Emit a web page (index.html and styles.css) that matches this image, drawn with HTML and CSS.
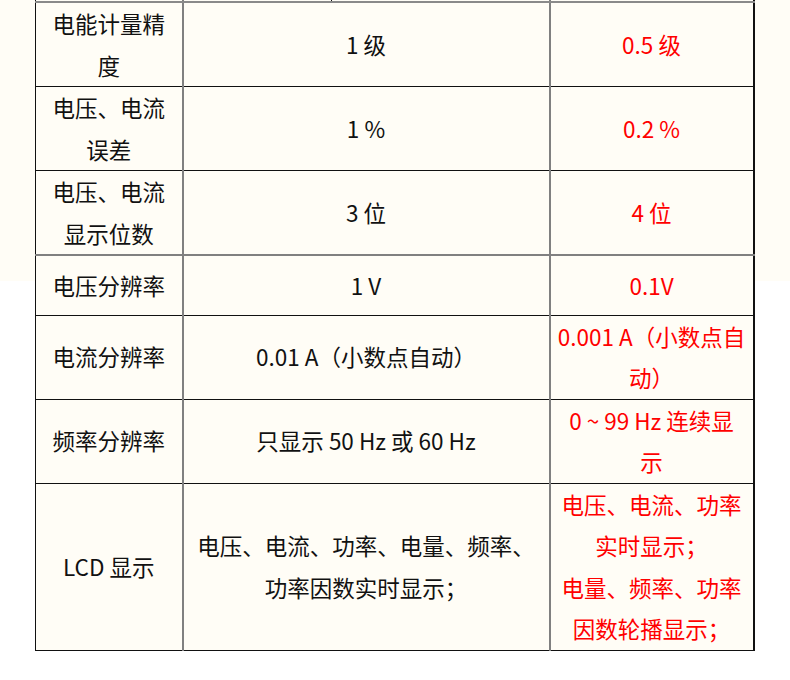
FILE: index.html
```html
<!DOCTYPE html>
<html lang="zh-CN">
<head>
<meta charset="utf-8">
<title>参数对比</title>
<link rel="stylesheet" href="styles.css">
</head>
<body>
<table class="spec">
  <colgroup>
    <col class="c1">
    <col class="c2a">
    <col class="c2b">
    <col class="c3">
  </colgroup>
  <tr class="stub">
    <td></td><td></td><td></td><td></td>
  </tr>
  <tr class="r2l">
    <td>电能计量精<br>度</td>
    <td colspan="2">1 级</td>
    <td class="red">0.5 级</td>
  </tr>
  <tr class="r2l">
    <td>电压、电流<br>误差</td>
    <td colspan="2">1 %</td>
    <td class="red">0.2 %</td>
  </tr>
  <tr class="r2l grey-bottom">
    <td>电压、电流<br>显示位数</td>
    <td colspan="2">3 位</td>
    <td class="red">4 位</td>
  </tr>
  <tr class="r1l">
    <td>电压分辨率</td>
    <td colspan="2">1 V</td>
    <td class="red">0.1V</td>
  </tr>
  <tr class="r2l">
    <td>电流分辨率</td>
    <td colspan="2">0.01 A（小数点自动）</td>
    <td class="red">0.001 A（小数点自<br>动）</td>
  </tr>
  <tr class="r2l">
    <td>频率分辨率</td>
    <td colspan="2">只显示 50 Hz 或 60 Hz</td>
    <td class="red">0 ~ 99 Hz 连续显<br>示</td>
  </tr>
  <tr class="r4l">
    <td>LCD 显示</td>
    <td colspan="2">电压、电流、功率、电量、频率、<br>功率因数实时显示；</td>
    <td class="red">电压、电流、功率<br>实时显示；<br>电量、频率、功率<br>因数轮播显示；</td>
  </tr>
</table>
</body>
</html>
```

FILE: styles.css
```css
html, body {
  margin: 0;
  padding: 0;
}

body {
  width: 790px;
  height: 680px;
  background: linear-gradient(#fffdf6 0, #fffdf6 281px, #ffffff 281px, #ffffff 100%);
  font-family: "Noto Sans CJK SC", "Noto Sans", sans-serif;
  color: #111111;
}

.spec {
  margin-left: 35px;
  border-collapse: collapse;
  table-layout: fixed;
  width: 718px;
  background: #fffdf6;
  border-left: 1px solid #111;
  border-right: 2px solid #111;
  border-bottom: 1px solid #111;
}

.c1 { width: 147px; }
.c2a { width: 149px; }
.c2b { width: 218px; }
.c3 { width: 204px; }

.spec td {
  padding: 0 6px;
  text-align: center;
  vertical-align: middle;
  font-size: 22.5px;
  line-height: 41.5px;
  border-top: 1px solid #111;
  border-left: 2px solid #808080;
}

.spec td:first-child {
  border-left: 1px solid #111;
}

.spec tr.stub td {
  height: 1px;
  padding: 0;
  font-size: 0;
  line-height: 0;
  border-top: none;
  border-left: 1px solid #111;
  border-bottom: 2px solid #8a8a8a;
}

.spec tr.stub td:nth-child(2),
.spec tr.stub td:nth-child(4) {
  border-left: 2px solid #808080;
}

.spec tr.r2l { height: 83px; }
.spec tr.r1l { height: 60px; }
.spec tr.r4l { height: 166px; }

.spec tr.grey-bottom td {
  border-bottom: 2px solid #808080;
}

.spec tr.r1l td {
  border-top: 2px solid #808080;
}

.spec td.red {
  color: #ff0000;
}
```
